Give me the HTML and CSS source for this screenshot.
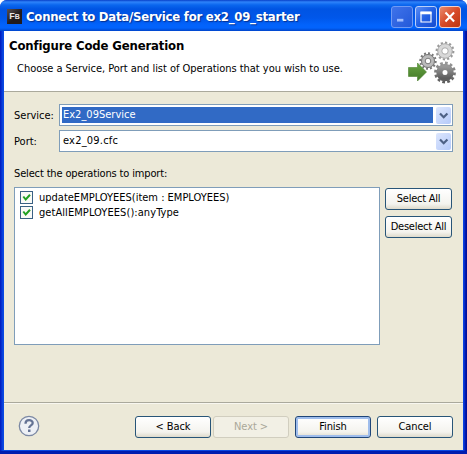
FILE: index.html
```
<!DOCTYPE html>
<html lang="en">
<head>
<meta charset="utf-8">
<title>Connect to Data/Service for ex2_09_starter</title>
<link rel="stylesheet" href="styles.css">
</head>
<body>
<div class="window">
  <header class="titlebar">
    <span class="app-icon">F<small>B</small></span>
    <span class="title">Connect to Data/Service for ex2_09_starter</span>
    <div class="controls">
      <span class="control minimize"><svg viewBox="0 0 21 22"><path d="M5 14.500h7" stroke="#9fbdff" stroke-width="3"/></svg></span>
      <span class="control"><svg viewBox="0 0 21 22"><path d="M5 6h11v10.500H5z" fill="none" stroke="#fff" stroke-width="1.300"/><path d="M4.500 6.500h12" stroke="#fff" stroke-width="3"/></svg></span>
      <span class="control close"><svg viewBox="0 0 21 22"><path d="M5.500 6l9.500 10M15 6l-9.500 10" stroke="#fff" stroke-width="2.300"/></svg></span>
    </div>
  </header>
  <section class="banner">
    <div>
      <h1>Configure Code Generation</h1>
      <p>Choose a Service, Port and list of Operations that you wish to use.</p>
    </div>
    <svg class="gears" viewBox="408 40 50 44">
      <defs>
        <linearGradient id="dark" x1="0" y1="0" x2="0" y2="1"><stop stop-color="#979797"/><stop offset="1" stop-color="#5d5d5d"/></linearGradient>
        <linearGradient id="arrow" x1="0" y1="0" x2="0" y2="1"><stop stop-color="#69a343"/><stop offset="1" stop-color="#427a27"/></linearGradient>
      </defs>
      <g fill="none" stroke="#999">
        <circle cx="445" cy="51" r="5.300" stroke-width="4" stroke="#d8d8d8"/>
        <circle cx="445" cy="51" r="7.300" stroke-width=".8"/>
        <circle cx="445" cy="51" r="8.400" stroke-width="2" pathLength="24" stroke-dasharray="1 1"/>
        <circle cx="445" cy="51" r="3.200" stroke-width=".8"/>
      </g>
      <g fill="none" stroke="#777">
        <circle cx="428" cy="61" r="4.900" stroke-width="4" stroke="#bbb"/>
        <circle cx="428" cy="61" r="6.500" stroke-width="1"/>
        <circle cx="428" cy="61" r="7.700" stroke-width="2" pathLength="24" stroke-dasharray="1 1"/>
        <circle cx="428" cy="61" r="2.800" stroke-width="1"/>
      </g>
      <g fill="none" stroke="url(#dark)">
        <circle cx="445" cy="72.500" r="5.600" stroke-width="6.200"/>
        <circle cx="445" cy="72.500" r="9.400" stroke-width="3" pathLength="24" stroke-dasharray="1.100 .9"/>
      </g>
      <path d="M408.500 67.500h9v-4.500l9 9-9 9v-4.500h-9z" fill="url(#arrow)" stroke="#4c812e" stroke-width=".6"/>
    </svg>
  </section>
  <main>
    <div class="field">
      <label>Service:</label>
      <div class="combo selected"><span class="value">Ex2_09Service</span><span class="drop"><svg viewBox="0 0 15 17"><path d="M4 6.500l3.700 3.700 3.700-3.700" fill="none" stroke="#4d6185" stroke-width="2.200"/></svg></span></div>
    </div>
    <div class="field">
      <label>Port:</label>
      <div class="combo port"><span class="value">ex2_09.cfc</span><span class="drop"><svg viewBox="0 0 15 17"><path d="M4 6.500l3.700 3.700 3.700-3.700" fill="none" stroke="#4d6185" stroke-width="2.200"/></svg></span></div>
    </div>
    <p class="caption">Select the operations to import:</p>
    <div class="operations">
      <ul class="list">
        <li><span class="check"><svg viewBox="0 0 11 11"><path d="M2.300 4.500l2.400 3 4.300-4.700" fill="none" stroke="#21a121" stroke-width="2"/></svg></span><span>updateEMPLOYEES(item : EMPLOYEES)</span></li>
        <li><span class="check"><svg viewBox="0 0 11 11"><path d="M2.300 4.500l2.400 3 4.300-4.700" fill="none" stroke="#21a121" stroke-width="2"/></svg></span><span class="op-get">getAllEMPLOYEES():anyType</span></li>
      </ul>
      <div class="side">
        <button>Select All</button>
        <button>Deselect All</button>
      </div>
    </div>
  </main>
  <footer>
    <svg class="help" viewBox="0 0 22 22"><circle cx="11" cy="11" r="9.700" fill="#edf0f5" stroke="#7b88a3" stroke-width="1.300"/><path d="M7.500 8.700c0-4.700 7.200-4.400 7.200-.7 0 2.500-3.500 2.300-3.500 5" fill="none" stroke="#647394" stroke-width="2.300"/><path d="M10 14.500h2.500v2.500H10z" fill="#647394"/></svg>
    <button>&lt; Back</button>
    <button class="next" disabled>Next &gt;</button>
    <button class="finish">Finish</button>
    <button class="cancel">Cancel</button>
  </footer>
</div>
</body>
</html>
```
FILE: styles.css
```
* { box-sizing: border-box; }
body, h1, p, ul { margin: 0; padding: 0; }
body { background: #fff; overflow: hidden; }
svg { display: block; }
.window {
  width: 467px;
  height: 454px;
  display: flex;
  flex-direction: column;
  padding: 0 4px 4px;
  border-radius: 7px 7px 0 0;
  background: linear-gradient(90deg, #0018bd 0, #0a49e2 3px, #0a49e2 463px, #0838dc 464px, #000f9b 466px);
  box-shadow: inset 0 -3px 0 #001daf;
  font: 11px/14px "DejaVu Sans Condensed", "DejaVu Sans", sans-serif;
  color: #000;
  white-space: nowrap;
}
.titlebar {
  height: 31px;
  flex: none;
  margin: 0 -4px;
  padding: 4px 6px 0 7px;
  display: flex;
  align-items: center;
  border-radius: 7px 7px 0 0;
  background: linear-gradient(#0840c8 0, #2e83fa 2px, #0a66ee 5px, #0054e3 9px, #0057ea 18px, #0263fc 25px, #0263fc 28px, #0045ca 31px);
}
.app-icon {
  width: 15px;
  height: 15px;
  margin-top: -3px;
  background: linear-gradient(135deg, #5a5050, #211b1c 55%);
  color: #e8e4e4;
  font: bold 9px/15px "Liberation Sans", sans-serif;
  text-align: center;
}
.app-icon small { font-size: 7px; }
.title {
  margin: -1px 0 0 4px;
  color: #fff;
  font: bold 13px/18px "DejaVu Sans Condensed", sans-serif;
  letter-spacing: -.24px;
  text-shadow: 1px 1px 1px #06318f;
}
.controls { display: flex; gap: 2px; margin-left: auto; margin-top: -1px; }
.control {
  width: 22px;
  height: 22px;
  border: 1px solid #b9cffa;
  border-radius: 3px;
  background: linear-gradient(135deg, #5b8df5, #2360e4 50%, #164bd0);
}
.control svg { width: 20px; height: 20px; }
.control.minimize { border-color: #6f9af4; background: linear-gradient(135deg, #3f73ea, #2359d9); }
.control.close { border-color: #f2cfc8; background: linear-gradient(135deg, #e98a6d, #d84a28 50%, #bd3510); }
.banner {
  height: 61px;
  flex: none;
  padding: 7px 5px 0 5px;
  display: flex;
  justify-content: space-between;
  background: #fff;
  border-bottom: 1px solid #aaa99c;
}
h1 { font: bold 13px/16px "DejaVu Sans Condensed", sans-serif; letter-spacing: -.15px; }
.banner p { margin: 8px 0 0 8px; letter-spacing: -.03px; }
.gears { width: 50px; height: 44px; margin-top: 2px; }
main {
  flex: 1;
  padding: 12px 10px 0;
  background: #ece9d8;
}
.field { display: flex; align-items: center; margin-bottom: 4px; }
label { width: 45px; padding-top: 1px; }
.combo {
  flex: 1;
  height: 22px;
  padding: 2px;
  display: flex;
  gap: 3px;
  border: 1px solid #7f9db9;
  background: #fff;
}
.value { flex: 1; padding: 1px 1px; }
.selected .value { background: #316ac5; color: #fff; height: 16px; }
.port .value { letter-spacing: .2px; }
.drop {
  width: 15px;
  height: 17px;
  margin-right: -1px;
  border-radius: 2px;
  background: linear-gradient(135deg, #dce6fd, #b5cafa);
}
.caption { margin-top: 15px; letter-spacing: -.15px; }
.operations { display: flex; gap: 5px; margin-top: 6px; }
.list {
  width: 366px;
  height: 158px;
  padding: 2px 5px;
  list-style: none;
  border: 1px solid #7f9db9;
  background: #fff;
}
li { display: flex; align-items: center; height: 15px; gap: 6px; }
.op-get { letter-spacing: .07px; }
.check { width: 13px; height: 13px; border: 1px solid #3a6184; background: #fafaf7; }
.side { display: flex; flex-direction: column; gap: 6px; padding-top: 1px; }
button {
  height: 22px;
  padding: 0;
  border: 1px solid #285578;
  border-radius: 3px;
  background: linear-gradient(#fff, #f4f3ee 75%, #dedacb);
  font: inherit;
  color: #000;
  white-space: nowrap;
}
.side button { width: 67px; letter-spacing: -.25px; }
footer {
  height: 48px;
  flex: none;
  display: flex;
  align-items: center;
  padding: 0 10px 0 14px;
  background: #ece9d8;
  border-top: 1px solid #aaa99c;
  box-shadow: inset 0 1px #f8f7f0;
}
footer button { width: 76px; letter-spacing: -.1px; }
.help { width: 22px; height: 22px; margin: -2px 95px 0 0; }
button.next { margin-left: 2px; border-color: #d1cebf; background: #f2f0e5; color: #aaa899; }
.finish { margin-left: 6px; box-shadow: inset 0 0 0 2px #9fbdec; border-color: #1f4679; }
.cancel { margin-left: 6px; }
```
